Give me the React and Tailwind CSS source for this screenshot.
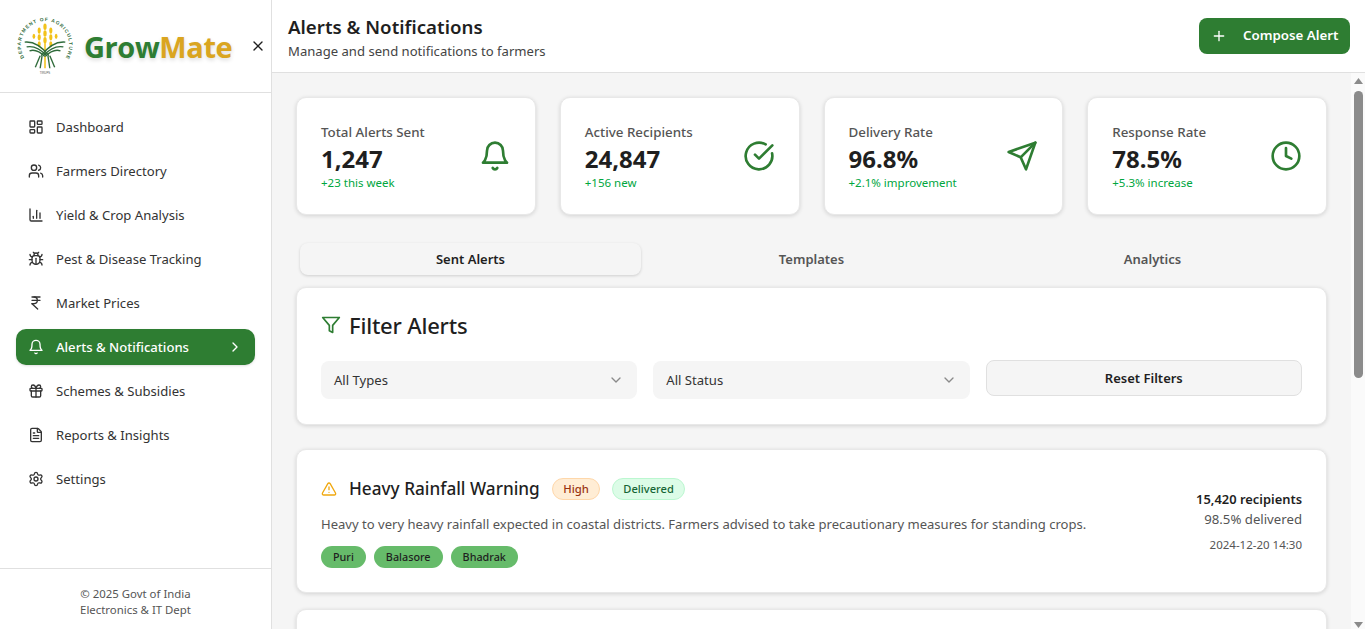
import React from "react";
import {
  LayoutDashboard, Users, ChartColumn, Bug, IndianRupee, Gift, FileText, Settings,
  ChevronRight, ChevronDown, X, Plus, CircleCheckBig, Clock, TriangleAlert,
} from "lucide-react";

const Stroke = ({ size, className, children }) => (
  <svg
    width={size}
    height={size}
    viewBox="0 0 24 24"
    fill="none"
    stroke="currentColor"
    strokeWidth="2"
    strokeLinecap="round"
    strokeLinejoin="round"
    className={className}
  >
    {children}
  </svg>
);

const BellIcon = (props) => (
  <Stroke {...props}>
    <path d="M6 8a6 6 0 0 1 12 0c0 7 3 9 3 9H3s3-2 3-9" />
    <path d="M10.3 21a1.94 1.94 0 0 0 3.4 0" />
  </Stroke>
);

const SendIcon = (props) => (
  <Stroke {...props}>
    <path d="m22 2-7 20-4-9-9-4Z" />
    <path d="M22 2 11 13" />
  </Stroke>
);

const FilterIcon = (props) => (
  <Stroke {...props}>
    <polygon points="22 3 2 3 10 12.46 10 19 14 21 14 12.46 22 3" />
  </Stroke>
);

const navItems = [
  { label: "Dashboard", icon: LayoutDashboard },
  { label: "Farmers Directory", icon: Users },
  { label: "Yield & Crop Analysis", icon: ChartColumn },
  { label: "Pest & Disease Tracking", icon: Bug },
  { label: "Market Prices", icon: IndianRupee },
  { label: "Alerts & Notifications", icon: BellIcon, active: true },
  { label: "Schemes & Subsidies", icon: Gift },
  { label: "Reports & Insights", icon: FileText },
  { label: "Settings", icon: Settings },
];

const stats = [
  { label: "Total Alerts Sent", value: "1,247", note: "+23 this week", icon: BellIcon },
  { label: "Active Recipients", value: "24,847", note: "+156 new", icon: CircleCheckBig },
  { label: "Delivery Rate", value: "96.8%", note: "+2.1% improvement", icon: SendIcon },
  { label: "Response Rate", value: "78.5%", note: "+5.3% increase", icon: Clock },
];

const Logo = () => (
  <svg viewBox="0 0 60 60" className="w-[58px] h-[58px] shrink-0">
    <defs>
      <path id="logoArc" d="M8.5 42 A25 25 0 1 1 51.5 42" />
    </defs>
    <text fontSize="5" fontWeight="700" fill="#2f6b3a" fontFamily="Liberation Sans, sans-serif" textLength="105">
      <textPath href="#logoArc">DEPARTMENT OF AGRICULTURE</textPath>
    </text>
    <g fill="#f2c21a">
      <ellipse cx="30" cy="10" rx="1.7" ry="3.4" />
      <ellipse cx="24" cy="14" rx="1.6" ry="3.2" />
      <ellipse cx="36" cy="14" rx="1.6" ry="3.2" />
      <ellipse cx="30" cy="17" rx="1.7" ry="3.4" />
      <ellipse cx="24" cy="21" rx="1.6" ry="3.2" />
      <ellipse cx="36" cy="21" rx="1.6" ry="3.2" />
      <ellipse cx="30" cy="24" rx="1.7" ry="3.4" />
      <ellipse cx="24" cy="28" rx="1.6" ry="3" />
      <ellipse cx="36" cy="28" rx="1.6" ry="3" />
      <ellipse cx="18.5" cy="20" rx="1.4" ry="2.8" />
      <ellipse cx="41.5" cy="20" rx="1.4" ry="2.8" />
      <rect x="29.2" y="27" width="1.6" height="9" />
    </g>
    <g fill="none" stroke="#2f6b3a" strokeWidth="1.4">
      <path d="M9 26 C19 25 27 31 34 40" />
      <path d="M11 31 C19 29 26 34 32 40" />
      <path d="M14 35 C20 33 25 36 30 41" />
      <path d="M51 26 C41 25 33 31 26 40" />
      <path d="M49 31 C41 29 34 34 28 40" />
      <path d="M46 35 C40 33 35 36 30 41" />
      <path d="M25 40 L20 52" />
      <path d="M27 40 L25 53" />
      <path d="M33 40 L35 53" />
      <path d="M35 40 L40 52" />
    </g>
    <rect x="29.2" y="41" width="1.6" height="12" fill="#f2c21a" />
    <text x="30" y="58.5" textAnchor="middle" fontSize="3" fill="#555" fontFamily="Liberation Sans, sans-serif">TIRUPS</text>
  </svg>
);

const Sidebar = () => (
  <aside className="w-[272px] shrink-0 h-full flex flex-col bg-white border-r border-[#e0e0e0]">
    <div className="h-[93px] shrink-0 flex items-center pl-4 pr-[5px] border-b border-[#e0e0e0]">
      <Logo />
      <div className="ml-[10px] text-[29px] leading-none font-bold [text-shadow:0_2px_4px_rgba(0,0,0,0.15)] font-['Open_Sans',sans-serif] tracking-[-0.4px]">
        <span className="text-[#2e7d32]">Grow</span>
        <span className="text-[#daa520]">Mate</span>
      </div>
      <X size={16} strokeWidth={2} className="ml-auto text-[#1f1f1f]" />
    </div>
    <nav className="flex-1 px-4 py-4 flex flex-col gap-2">
      {navItems.map(({ label, icon: Icon, active }) => (
        <a
          key={label}
          className={`h-9 flex items-center gap-3 px-3 rounded-[10px] text-[13.1px] ${active ? "bg-[#2e7d32] text-white font-medium shadow-sm" : "text-[#333333]"}`}
        >
          <Icon size={16} className="shrink-0" />
          <span className="pt-[2px]">{label}</span>
          {active && <ChevronRight size={16} className="ml-auto" />}
        </a>
      ))}
    </nav>
    <div className="h-[61px] shrink-0 border-t border-[#e0e0e0] pt-[17px] text-center text-[11.4px] leading-4 text-[#555555]">
      <p>© 2025 Govt of India</p>
      <p>Electronics &amp; IT Dept</p>
    </div>
  </aside>
);

const Header = () => (
  <header className="h-[73px] shrink-0 bg-white border-b border-[#e0e0e0] flex items-center justify-between pl-4 pr-[15px]">
    <div className="pt-px">
      <h1 className="text-[18.7px] leading-7 font-semibold text-[#1f1f1f]">Alerts &amp; Notifications</h1>
      <p className="text-[13.1px] leading-5 text-[#444444]">Manage and send notifications to farmers</p>
    </div>
    <button className="h-9 w-[151px] flex items-center gap-4 pl-3 rounded-lg bg-[#2e7d32] text-white text-[13.3px] font-semibold">
      <Plus size={16} />
      Compose Alert
    </button>
  </header>
);

const StatCard = ({ label, value, note, icon: Icon }) => (
  <div className="h-[118px] bg-white border border-[#e8e8e8] rounded-[10px] shadow-[0_1px_4px_rgba(0,0,0,0.14)] flex items-center justify-between pl-6 pr-6">
    <div className="pt-px">
      <p className="text-[13.35px] leading-5 font-medium text-[#555555]">{label}</p>
      <p className="mt-px text-2xl leading-8 font-bold text-[#1f1f1f]">{value}</p>
      <p className="text-[11.5px] leading-4 text-[#00a63e]">{note}</p>
    </div>
    <Icon size={32} className="text-[#2e7d32]" />
  </div>
);

const SelectBox = ({ label }) => (
  <button className="h-[38px] mt-px flex items-center justify-between pl-[13px] pr-[13px] rounded-lg bg-[#f5f5f5] text-[13.1px] text-[#333333]">
    <span className="pt-[2px]">{label}</span>
    <ChevronDown size={16} className="text-[#8a8a8a]" />
  </button>
);

const Scrollbar = () => (
  <div className="w-[14px] shrink-0 h-full flex flex-col items-center bg-[#fafafa]">
    <svg width="9" height="18" viewBox="0 0 9 18" className="shrink-0">
      <polygon points="4.5,5 9,11 0,11" fill="#8b8b8b" />
    </svg>
    <div className="w-[9px] h-[287px] shrink-0 rounded-full bg-[#8b8b8b]" />
    <svg width="9" height="18" viewBox="0 0 9 18" className="mt-auto shrink-0">
      <polygon points="0,11 9,11 4.5,17" fill="#8b8b8b" />
    </svg>
  </div>
);

const cardClass = "bg-white border border-[#e8e8e8] rounded-[10px] shadow-[0_1px_4px_rgba(0,0,0,0.14)]";

const AlertCard = () => (
  <div className={`h-[144px] px-6 pt-[27px] flex justify-between ${cardClass}`}>
    <div>
      <div className="flex items-center">
        <TriangleAlert size={16} className="text-[#f0a80f]" />
        <h3 className="ml-3 text-[17.2px] leading-6 font-medium text-[#1f1f1f]">Heavy Rainfall Warning</h3>
        <span className="ml-3 h-[22px] px-[10.5px] flex items-center rounded-full border border-[#fed7aa] bg-[#ffedd5] text-[11.3px] font-medium text-[#9a3412]">High</span>
        <span className="ml-3 h-[22px] px-[10px] flex items-center rounded-full border border-[#bbf7d0] bg-[#dcfce7] text-[11.1px] font-medium text-[#166534]">Delivered</span>
      </div>
      <p className="mt-[13px] text-[13.06px] leading-5 text-[#555555]">
        Heavy to very heavy rainfall expected in coastal districts. Farmers advised to take precautionary measures for standing crops.
      </p>
      <div className="mt-[12px] flex gap-2">
        {["Puri", "Balasore", "Bhadrak"].map((p) => (
          <span key={p} className="h-[22px] px-3 flex items-center rounded-full bg-[#66bb6a] text-[10.8px] font-medium text-[#1f1f1f]">{p}</span>
        ))}
      </div>
    </div>
    <div className="text-right pt-[12px]">
      <p className="text-[12.9px] leading-5 font-semibold text-[#1f1f1f]">15,420 recipients</p>
      <p className="text-[13.2px] leading-5 text-[#555555]">98.5% delivered</p>
      <p className="mt-2 text-[11.5px] leading-4 text-[#555555]">2024-12-20 14:30</p>
    </div>
  </div>
);

export default function App() {
  return (
    <div className="h-screen flex overflow-hidden bg-[#f5f5f5] font-['Noto_Sans',sans-serif]">
      <Sidebar />
      <div className="flex-1 min-w-0 flex flex-col">
        <Header />
        <div className="flex-1 min-h-0 flex">
          <main className="flex-1 min-w-0 overflow-hidden p-6">
            <div className="grid grid-cols-4 gap-6 mb-6">
              {stats.map((s) => <StatCard key={s.label} {...s} />)}
            </div>
            <div className="h-10 p-1 grid grid-cols-3 mb-2">
              {["Sent Alerts", "Templates", "Analytics"].map((t, i) => (
                <button key={t} className={`pt-px rounded-lg text-[13px] font-semibold ${i === 0 ? "text-[#1f1f1f] shadow-[0_1px_3px_rgba(0,0,0,0.16)]" : "text-[#555555]"}`}>{t}</button>
              ))}
            </div>
            <section className={`h-[138px] mb-6 px-6 pt-[21px] ${cardClass}`}>
              <div className="flex items-center gap-2">
                <FilterIcon size={20} className="text-[#2e7d32]" />
                <h2 className="text-[22px] leading-8 font-medium tracking-[-0.2px] text-[#1f1f1f]">Filter Alerts</h2>
              </div>
              <div className="mt-[19px] grid grid-cols-3 gap-4 items-start">
                <SelectBox label="All Types" />
                <SelectBox label="All Status" />
                <button className="h-9 pt-px rounded-lg bg-[#f5f5f5] border border-[#e0e0e0] text-[13px] font-semibold text-[#1f1f1f]">Reset Filters</button>
              </div>
            </section>
            <div className="flex flex-col gap-4">
              <AlertCard />
              <div className={`h-[144px] shrink-0 ${cardClass}`} />
            </div>
          </main>
          <Scrollbar />
        </div>
      </div>
    </div>
  );
}
